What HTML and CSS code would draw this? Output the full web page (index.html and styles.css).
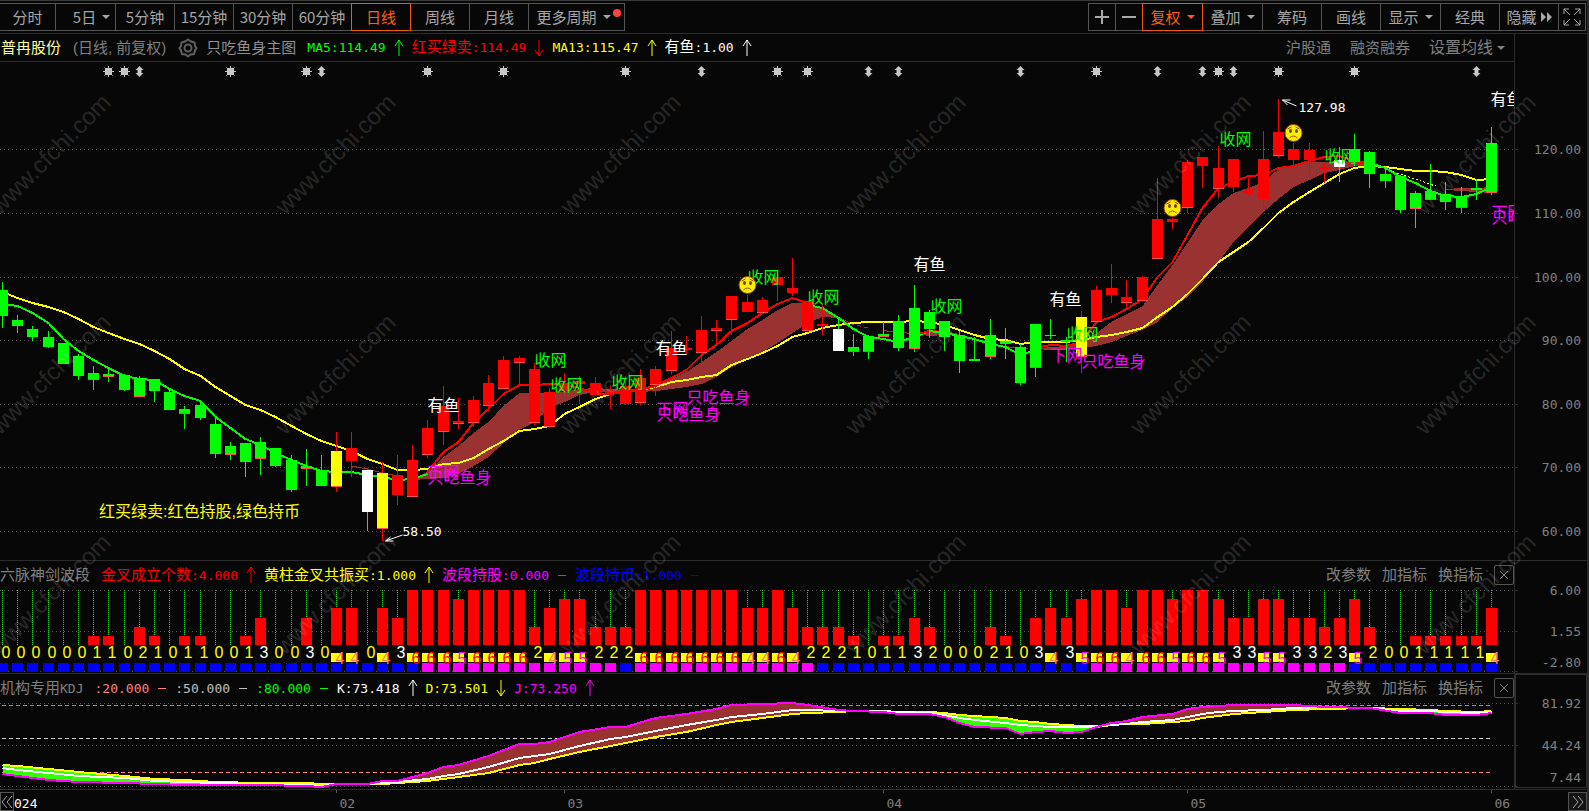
FILE: index.html
```html
<!DOCTYPE html>
<html lang="zh-CN">
<head>
    <meta charset="UTF-8">
    <meta name="viewport" content="width=device-width, initial-scale=1.0">
    <title>普冉股份 日线</title>
    <link rel="stylesheet" href="styles.css">
</head>
<body>
    <div class="toolbar">
        <div class="btn-group">
            <button class="first">分时</button>
            <button class="has-caret wide">5日<i class="caret"></i></button>
            <button>5分钟</button>
            <button>15分钟</button>
            <button>30分钟</button>
            <button>60分钟</button>
            <button class="active">日线</button>
            <button>周线</button>
            <button>月线</button>
            <button class="more">更多周期<i class="caret"></i><i class="dot"></i></button>
        </div>
        <div class="btn-group">
            <button class="icon-btn" aria-label="放大"><svg width="16" height="16"><path d="M8 1V15M1 8H15"/></svg></button>
            <button class="icon-btn" aria-label="缩小"><svg width="16" height="16"><path d="M1 8H15"/></svg></button>
            <button class="active wide">复权<i class="caret"></i></button>
            <button class="wide">叠加<i class="caret"></i></button>
            <button>筹码</button>
            <button>画线</button>
            <button class="wide">显示<i class="caret"></i></button>
            <button>经典</button>
            <button class="hide-btn">隐藏<svg width="11" height="10"><path class="solid" d="M0 0L5 5L0 10ZM6 0L11 5L6 10Z"/></svg></button>
            <button class="icon-btn" aria-label="全屏"><svg class="thin" width="18" height="18"><path d="M1 6V1H6M1 1L7 7M12 1H17V6M17 1L11 7M1 12V17H6M1 17L7 11M12 17H17V12M17 17L11 11"/></svg></button>
        </div>
    </div>

    <section class="panel main-panel">
        <div class="panel-head">
            <div class="fields">
                <span class="stock">普冉股份</span>
                <span class="period">(日线, 前复权)</span>
                <svg class="gear" width="20" height="20"><path d="M10 1.5L13 3.5L16.500 4.500L17 8L18.500 10L17 12.500L16 16L12.500 16.500L10 18.500L7.500 16.500L4 16L3 12.500L1.500 10L3 8L3.500 4.500L7 3.500Z"/><circle cx="10" cy="10" r="3.500"/></svg>
                <span class="name">只吃鱼身主图</span>
                <span class="green"><b>MA5:114.49</b></span><svg class="arrow green" width="10" height="18"><path d="M5 17V1M1 7L5 1L9 7"/></svg>
                <span class="red">红买绿卖<b>:114.49</b></span><svg class="arrow red" width="10" height="18"><path d="M5 1V17M1 11L5 17L9 11"/></svg>
                <span class="yellow"><b>MA13:115.47</b></span><svg class="arrow yellow" width="10" height="18"><path d="M5 17V1M1 7L5 1L9 7"/></svg>
                <span class="white">有鱼<b>:1.00</b></span><svg class="arrow white" width="10" height="18"><path d="M5 17V1M1 7L5 1L9 7"/></svg>
            </div>
            <div class="links main-links">
                <a href="#">沪股通</a>
                <a href="#">融资融券</a>
                <a href="#" class="ma-set">设置均线<i class="caret"></i></a>
            </div>
        </div>
        <svg id="kline" class="chart" role="img" aria-label="K线图"></svg>
    </section>

    <section class="panel">
        <div class="panel-head">
            <div class="fields">
                <span class="title">六脉神剑波段</span>
                <span class="red">金叉成立个数<b>:4.000</b></span><svg class="arrow red" width="10" height="18"><path d="M5 17V1M1 7L5 1L9 7"/></svg>
                <span class="yellow">黄柱金叉共振买<b>:1.000</b></span><svg class="arrow yellow" width="10" height="18"><path d="M5 17V1M1 7L5 1L9 7"/></svg>
                <span class="magenta">波段持股<b>:0.000</b></span><i class="dash magenta"></i>
                <span class="blue">波段持币<b>:1.000</b></span><i class="dash blue"></i>
            </div>
            <div class="links">
                <a href="#">改参数</a>
                <a href="#">加指标</a>
                <a href="#">换指标</a>
                <button class="close" aria-label="关闭"><svg width="10" height="10"><path d="M1 1L9 9M9 1L1 9"/></svg></button>
            </div>
        </div>
        <svg id="bars" class="chart" role="img" aria-label="六脉神剑波段"></svg>
    </section>

    <section class="panel kdj-panel">
        <div class="panel-head">
            <div class="fields">
                <span class="title">机构专用<b>KDJ</b></span>
                <span class="salmon"><b>:20.000</b></span><i class="dash salmon"></i>
                <span class="silver"><b>:50.000</b></span><i class="dash silver"></i>
                <span class="green"><b>:80.000</b></span><i class="dash green"></i>
                <span class="white"><b>K:73.418</b></span><svg class="arrow white" width="10" height="18"><path d="M5 17V1M1 7L5 1L9 7"/></svg>
                <span class="yellow"><b>D:73.501</b></span><svg class="arrow yellow" width="10" height="18"><path d="M5 1V17M1 11L5 17L9 11"/></svg>
                <span class="magenta"><b>J:73.250</b></span><svg class="arrow magenta" width="10" height="18"><path d="M5 17V1M1 7L5 1L9 7"/></svg>
            </div>
            <div class="links">
                <a href="#">改参数</a>
                <a href="#">加指标</a>
                <a href="#">换指标</a>
                <button class="close" aria-label="关闭"><svg width="10" height="10"><path d="M1 1L9 9M9 1L1 9"/></svg></button>
            </div>
        </div>
        <svg id="kdj" class="chart" role="img" aria-label="KDJ"></svg>
    </section>

    <div class="timeline">
        <button class="page-btn" aria-label="向左"><svg width="12" height="14"><path d="M6 1L1 7L6 13M11 1L6 7L11 13"/></svg></button>
        <svg id="dates" class="dates"></svg>
        <button class="page-btn" aria-label="向右"><svg width="12" height="14"><path d="M1 1L6 7L1 13M6 1L11 7L6 13"/></svg></button>
    </div>

    <svg id="watermark" class="watermark" aria-hidden="true"></svg>

    <script src="chart.js"></script>
</body>
</html>
```

FILE: styles.css
```css
* {
    box-sizing: border-box;
}
body {
    margin: 0;
    height: 100vh;
    display: flex;
    flex-direction: column;
    overflow: hidden;
    position: relative;
    background-color: #070707;
    border-right: 2px solid #2a2a2a;
    color: #808080;
    font-family: "Liberation Sans", "Noto Sans CJK SC", sans-serif;
    font-size: 15px;
}
button {
    font-family: "Noto Sans CJK SC", sans-serif;
    font-size: 15px;
    color: #a8a8a8;
    background: none;
    border: 1px solid #555;
    padding: 0;
    cursor: pointer;
}
b {
    font-family: "DejaVu Sans Mono", monospace;
    font-size: 13px;
    font-weight: normal;
}
svg path {
    fill: none;
    stroke: currentColor;
}

/* toolbar */
.toolbar {
    height: 34px;
    flex: none;
    display: flex;
    justify-content: space-between;
    padding-top: 2px;
    padding-right: 1px;
    border-top: 1px solid #3a3a3a;
    border-bottom: 1px solid #2c2c2c;
}
.btn-group {
    display: flex;
    height: 28px;
}
.btn-group button {
    width: 60px;
    margin-left: -1px;
    display: flex;
    align-items: center;
    justify-content: center;
    gap: 6px;
    line-height: 20px;
    white-space: nowrap;
}
.btn-group .first {
    width: 57px;
}
.btn-group .wide {
    width: 61px;
}
.btn-group .has-caret {
    padding-left: 12px;
}
.btn-group .more {
    width: 97px;
    position: relative;
    padding-right: 6px;
}
.btn-group .icon-btn {
    width: 28px;
}
.btn-group .hide-btn {
    gap: 4px;
}
.btn-group .active {
    color: #ff6010;
    border-color: #f05a10;
    position: relative;
    z-index: 1;
}
.icon-btn path {
    stroke-width: 2;
}
.icon-btn .thin path {
    stroke-width: 1;
}
.toolbar path.solid {
    fill: currentColor;
    stroke: none;
}
.caret {
    border: 4px solid transparent;
    border-top-color: currentColor;
    border-bottom: none;
}
.dot {
    position: absolute;
    top: 5px;
    right: 3px;
    width: 8px;
    height: 8px;
    border-radius: 50%;
    background-color: #ff4040;
}

/* chart panels */
.panel {
    flex: none;
    border-top: 1px solid #2c2c2c;
}
.main-panel {
    flex: 1;
    min-height: 0;
    border-top: none;
}
.panel-head {
    height: 28px;
    margin-right: 72px;
    display: flex;
    align-items: center;
    justify-content: space-between;
    line-height: 20px;
    white-space: nowrap;
    border-right: 1px solid #2c2c2c;
}
.main-panel .panel-head {
    border-bottom: 1px solid #2c2c2c;
}
.fields, .links {
    display: flex;
    align-items: center;
}
.fields {
    gap: 8px;
}
.fields .stock {
    color: #ffffa0;
    padding-left: 1px;
}
.fields .period {
    margin: 0 4px;
}
.fields .name {
    margin-right: 3px;
    color: #909090;
}
.fields .title {
    margin-right: 3px;
}
.links {
    gap: 11px;
}
.links a {
    color: #808080;
    text-decoration: none;
}
.main-links {
    gap: 19px;
    padding-right: 9px;
}
.ma-set {
    display: flex;
    align-items: center;
    gap: 4px;
    font-size: 16px;
}
.close {
    width: 20px;
    height: 20px;
    border-radius: 2px;
    display: flex;
    align-items: center;
    justify-content: center;
    color: #808080;
}
.gear {
    color: #606060;
}
.gear path, .gear circle {
    fill: none;
    stroke: currentColor;
    stroke-width: 2;
}
.dash {
    width: 8px;
    height: 1px;
    margin: 0 1px;
    background-color: currentColor;
}
.chart {
    display: block;
    width: 100%;
    overflow: visible;
}
#kline {
    height: 498px;
}
#bars {
    height: 84px;
}
#kdj {
    height: 87px;
}

/* colours */
.red { color: #f00; }
.green { color: #0f0; }
.yellow { color: #ff0; }
.white { color: #fff; }
.magenta { color: #f0f; }
.blue { color: #00f; }
.salmon { color: #ff8080; }
.silver { color: #c0c0c0; }

/* chart text */
.chart text, .dates text {
    font-family: "Liberation Sans", "Noto Sans CJK SC", sans-serif;
    font-size: 16px;
    fill: currentColor;
}
.chart text.num, .dates text.num {
    font-family: "DejaVu Sans Mono", monospace;
    font-size: 13px;
}
.grid {
    stroke: #505050;
    stroke-dasharray: 1 3;
}
.frame {
    stroke: #2c2c2c;
}

/* time axis */
.timeline {
    flex: none;
    height: 22px;
    display: flex;
    align-items: flex-end;
    border-top: 1px solid #2c2c2c;
}
.dates {
    flex: 1;
    height: 21px;
}
.page-btn {
    width: 14px;
    height: 19px;
    display: flex;
    align-items: center;
    justify-content: center;
}
.page-btn:last-child {
    width: 19px;
    background-color: #151515;
}

.watermark {
    position: absolute;
    top: 0;
    left: 0;
    width: 100%;
    height: 100%;
    pointer-events: none;
}
.watermark text {
    font-family: "Liberation Sans", sans-serif;
    font-size: 24px;
    fill: #fff;
    fill-opacity: 0.15;
}
```

FILE: chart.js
```js
const RED = '#ff0000', GREEN = '#00ff00', YELLOW = '#ffff00', WHITE = '#ffffff';
const MAGENTA = '#ff00ff', BLUE = '#0000ff', BAND = '#9a3232';

const AXIS = 72;
const width = document.getElementById('kline').clientWidth || document.body.clientWidth;
const plot = width - AXIS - 1;

// candle: colour, high, body top, body bottom, low, marked close
const candles = [
    ['g',282,290,316,328],['g',315,320,326,333],['g',326,329,337,341],['g',331,337,347,348],['g',343,343,364,364],
    ['g',354,356,376,380],['g',366,373,380,390,1],['g',367,374,377,382,1],['g',374,375,390,391],['g',376,379,397,397,1],
    ['g',379,379,391,402],['g',390,392,410,410],['g',406,409,414,429,1],['g',402,405,418,420],['g',417,424,454,458],
    ['g',442,446,455,460,1],['g',443,443,462,477],['g',437,442,459,475,1],['g',448,448,466,467],['g',455,460,490,492],
    ['g',449,466,469,486,1],['g',455,470,486,486],['y',432,451,487,492,1],['r',432,448,461,477],['w',470,470,512,531],
    ['y',462,473,529,541,1],['r',455,475,495,505],['r',445,460,497,497,1],['r',420,428,455,458,1],['r',386,406,432,445,1],
    ['r',398,421,424,429,1],['r',396,400,423,427,1],['r',375,383,406,411,1],['r',356,360,389,389,1],['r',356,358,363,385,1],
    ['r',363,369,423,425,1],['r',388,392,427,427,1],['r',373,383,391,391],['r',376,381,384,404],['r',377,383,395,396],
    ['r',385,391,394,409],['r',376,386,404,405],['r',369,378,403,405,1],['r',366,369,385,396,1],['r',331,348,371,374,1],
    ['r',336,348,350,354],['r',316,330,353,363,1],['r',320,328,331,346,1],['r',296,296,320,335,1],['r',295,302,312,312],
    ['r',297,300,313,313,1],['r',273,277,285,301],['r',258,288,293,296],['r',301,301,331,331,1],['r',304,324,326,335],
    ['w',317,329,351,351],['g',334,347,352,356,1],['g',335,336,352,359,1],['g',322,334,337,337,1],['g',315,321,348,351],
    ['g',285,308,349,352,1],['g',310,312,329,338],['g',321,321,337,351],['g',331,335,361,373],['g',337,359,361,361],
    ['g',319,335,357,359,1],['g',328,341,344,359],['g',344,347,383,385],['g',324,324,368,377,1],['g',319,335,336,339],
    ['g',337,340,342,362],['y',311,317,357,373,1],['r',286,290,322,322,1],['r',264,288,295,303],['r',280,297,303,307,1],
    ['r',276,277,301,302,1],['r',178,219,259,259,1],['r',218,219,222,229],['r',160,162,208,213,1],['r',157,157,166,188],
    ['r',146,168,189,198,1],['r',159,159,187,192],['r',178,189,194,196],['r',131,159,199,208],['r',99,132,156,158,1],
    ['r',143,149,160,166],['r',143,150,160,178],['r',163,167,169,183],['w',147,160,167,182],['g',134,149,162,166],
    ['g',151,152,174,188],['g',169,174,181,188],['g',175,176,210,213],['g',191,193,209,228,1],['g',164,191,200,200,1],
    ['g',182,194,202,210],['g',187,196,208,213,1],['g',179,188,190,200],['g',127,143,193,195,1]
];
const last = candles.length - 1;

const ma13 = [292,298,303,307,312,319,327,333,339,344,351,359,369,376,387,396,405,410,417,426,434,441,446,451,459,464,470,
    470,469,464,463,458,449,441,431,429,426,414,407,399,394,392,390,387,382,380,377,375,365,359,353,346,337,333,328,325,323,
    322,322,322,321,322,325,330,335,339,340,344,342,342,342,340,337,335,332,328,317,307,294,279,262,252,242,228,213,202,192,
    183,174,168,166,167,169,171,171,172,175,180,179];

// start bar, colour, values
const ma5 = [
    [0, GREEN, [304,306,313,323,339,351,360,368,376,379,380,389,396,401,417,428,439,445,453,460,466,471,472,472,475,477,480,479,474]],
    [28, RED, [472,452,442,423,409,394,385,385,384,384,388,394,394,392,390,386,378,370,355,345,331,323,313,304,298,303]],
    [53, GREEN, [305,308,318,329,337,339,342,337,331]],
    [60, RED, [335,331,332]],
    [61, GREEN, [331,333,336,339,344,347,355,350]],
    [68, RED, [348,345,346,342,322,317,309,299,277,262,235,208,188,182,176,175,168,166,161,157,156,161,163]],
    [90, GREEN, [163,168,177,183,191,196,197,194,187]]
];

// start bar, upper edge, lower edge
const bands = [
    [27, [479,472,457,446,433,422,406,393,393,393,392,389,388,389,390,388,385,379,372,362,352,341,329,320,310,303,303,309,317,324],
         [480,479,478,474,466,457,443,430,422,408,402,395,392,392,392,392,391,389,387,384,377,367,359,352,343,333,323,317,318,325]],
    [58, [330,332,333,332,331,334], [331,333,334,336,335,336]],
    [66, [346,348,349,347,347,343,333,322,314,306,285,265,243,220,204,193,188,182,169,167,162,162,161,162,162],
         [347,349,349,350,349,348,346,342,336,330,322,308,297,282,262,242,227,212,199,187,180,173,170,166,166]],
    [95, [189,188,188,187], [190,191,192,193]]
];

const counts = '000000110210110013003044043' +
    '666566662455222666666644642' +
    '22101132000210343566466566' +
    '5335533235200111114';

// position of each bar follows the plot width
function barX(i) {
    return 2 + Math.round(i * (plot - 25) / last) + 0.5;
}

function tag(name, attrs, text) {
    const list = Object.keys(attrs).map(k => `${k}="${attrs[k]}"`).join(' ');
    return `<${name} ${list}>${text === undefined ? '' : text}</${name}>`;
}
function rect(x, y, w, h, fill) {
    return tag('rect', { x, y, width: w, height: h, fill });
}
function line(x1, y1, x2, y2, attrs) {
    return tag('line', Object.assign({ x1, y1, x2, y2 }, attrs));
}
function vline(x, y1, y2, stroke) {
    return line(x, y1, x, y2, { stroke });
}
function polyline(points, color, w) {
    return tag('polyline', { points: points.map(p => p.join()).join(' '), fill: 'none', stroke: color, 'stroke-width': w });
}
function polygon(points, fill) {
    return tag('polygon', { points: points.map(p => p.join()).join(' '), fill });
}
function text(x, y, str, color, cls) {
    return tag('text', { x, y: y + (cls ? 5 : 6), color, class: cls || '' }, str);
}
function setSvg(id, top, height, html) {
    const svg = document.getElementById(id);
    svg.setAttribute('viewBox', `0 ${top} ${svg.clientWidth || width} ${height}`);
    svg.innerHTML = html;
}
function axis(rows, top, bottom) {
    let out = line(plot + 0.5, top, plot + 0.5, bottom, { class: 'frame' });
    rows.forEach(([y, label, labelY]) => {
        out += line(0, y + 0.5, plot, y + 0.5, { class: 'grid' });
        out += line(plot, y + 0.5, plot + 4, y + 0.5, { class: 'frame' });
        out += tag('text', { x: width - 6, y: (labelY || y) + 5, class: 'num', 'text-anchor': 'end' }, label);
    });
    return out;
}

function face(x, y) {
    return `<g transform="translate(${x},${y})">
        <circle r="8.500" fill="#ffee00" stroke="#a04800"/>
        <ellipse cx="-3" cy="-2" rx="1.500" ry="2" fill="#804000"/><ellipse cx="3" cy="-2" rx="1.500" ry="2" fill="#804000"/>
        <path d="M-6 -4L-2 -6M6 -4L2 -6M-4 5Q0 1 4 5" color="#a05000"/></g>`;
}

function drawKline() {
    let s = axis([[149, '120.00'], [213, '110.00'], [277, '100.00'], [340, '90.00'], [404, '80.00'], [467, '70.00'], [531, '60.00']], 62, 560);
    s += `<clipPath id="plotArea">${rect(0, 62, plot, 498, WHITE)}</clipPath><g clip-path="url(#plotArea)">`;

    // event marks above the candles
    [7, 8, 15, 20, 28, 33, 41, 51, 53, 72, 80, 84, 89].forEach(i => {
        const x = barX(i);
        s += rect(x - 3.5, 68, 7, 7, '#c8c8c8');
        s += tag('path', { d: `M${x} 66V77M${x - 5.5} 71.5H${x + 5.5}M${x - 4} 67.500L${x + 4} 75.500M${x + 4} 67.500L${x - 4} 75.500`, color: '#c8c8c8' });
    });
    [9, 21, 46, 57, 59, 67, 76, 79, 81, 97].forEach(i => {
        const x = barX(i);
        s += polygon([[x, 66], [x + 4, 70], [x + 2, 70], [x + 2, 73], [x + 4, 73], [x, 77], [x - 4, 73], [x - 2, 73], [x - 2, 70], [x - 4, 70]], '#c8c8c8');
    });

    s += '<g shape-rendering="crispEdges">';
    bands.forEach(([start, up, low]) => {
        const a = up.map((y, k) => [barX(start + k), y]);
        const b = low.map((y, k) => [barX(start + k), y]).reverse();
        s += polygon(a.concat(b), BAND);
    });
    s += polyline([[barX(23), 466], [barX(24), 469], [barX(25), 473], [barX(26), 476]], BAND, 1);
    s += line(barX(56) - 10, 322, barX(57), 328, { stroke: BAND, 'stroke-dasharray': '4 3' });
    s += line(barX(91), 169, barX(94) + 5, 186, { stroke: YELLOW, 'stroke-dasharray': '2 2' });
    s += polyline(ma13.map((y, i) => [barX(i), y]), YELLOW, 2);
    ma5.forEach(([start, color, ys]) => {
        s += polyline(ys.map((y, k) => [barX(start + k), y]), color, 2);
    });
    const fills = { g: GREEN, r: RED, y: YELLOW, w: WHITE };
    const wicks = { g: GREEN, r: RED, y: RED, w: GREEN };
    candles.forEach(([c, high, top, bottom, low, mark], i) => {
        const x = barX(i);
        s += vline(x, high, low, wicks[c]);
        s += rect(x - 5.5, top, 11, Math.max(1, bottom - top), fills[c]);
        if (mark) s += rect(x - 5.5, bottom - 1, 11, 1, '#ff5050');
    });
    s += '</g>';

    // labels: bar, x offset, y
    [[28, 0, 405], [43, 0, 348], [60, -1, 264], [69, -1, 299], [98, -1, 99]].forEach(([i, dx, y]) => {
        s += text(barX(i) + dx, y, '有鱼', WHITE);
    });
    [[35, 0, 360], [36, 1, 385], [40, 1, 382], [49, 0, 277], [53, 0, 297], [61, 1, 306], [70, 0, 334], [80, 1, 139], [87, 0, 156]].forEach(([i, dx, y]) => {
        s += text(barX(i) + dx, y, '收网', GREEN);
    });
    [[28, 0, 472, 477], [43, 1, 409, 414], [69, 0, 355, 0], [98, 0, 212, 217]].forEach(([i, dx, y, y2]) => {
        s += text(barX(i) + dx, y, '下网', MAGENTA);
        if (y2) s += text(barX(i) + dx, y2, '只吃鱼身', MAGENTA);
    });
    s += text(barX(45), 397, '只吃鱼身', MAGENTA);
    s += text(barX(71), 361, '只吃鱼身', MAGENTA);
    s += face(barX(49), 285) + face(barX(77), 208) + face(barX(85), 133);

    s += text(barX(84) + 20, 107, '127.98', WHITE, 'num');
    s += tag('path', { d: `M${barX(84) + 18} 106L${barX(84) + 4} 100L${barX(84) + 12} 100M${barX(84) + 4} 100L${barX(84) + 9} 105`, color: WHITE });
    s += text(barX(25) + 20, 531, '58.50', WHITE, 'num');
    s += tag('path', { d: `M${barX(25) + 20} 535L${barX(25) + 3} 541H${barX(25) + 11}M${barX(25) + 3} 541L${barX(25) + 8} 537`, color: WHITE });
    s += text(99, 511, '红买绿卖:红色持股,绿色持币', YELLOW);
    s += '</g>';
    setSvg('kline', 62, 498, s);
}

function drawBars() {
    let s = axis([[590, '6.00'], [631, '1.55'], [671, '-2.80', 662]], 589, 673);
    let labels = '';
    s += '<g shape-rendering="crispEdges">';
    for (let i = 0; i <= last; i++) {
        const n = Number(counts[i]);
        const x = barX(i);
        const h = Math.round(n * 9.15);
        s += line(x, 590, x, 645 - h, { stroke: '#20e020', 'stroke-dasharray': '1 1' });
        if (n) s += rect(x - 5.5, 645 - h, 11, h, RED);
        const hold = (i > 27 && i < 54 && i !== 41) || (i > 71 && i < 89);
        s += rect(x - 5.5, 663, 11, 9, hold ? MAGENTA : BLUE);
        if (n > 3) {
            s += rect(x - 5.5, 653, 11, 9, YELLOW);
            labels += text(x - 1, 658, n, { 4: '#ff8060', 5: MAGENTA, 6: RED }[n]);
        } else {
            labels += text(x - 1, 652, n, n === 3 ? WHITE : YELLOW);
        }
    }
    s += '</g>' + labels;
    setSvg('bars', 589, 84, s);
}

function drawKdj() {
    // bar, J, K, D
    const keys = [
        [0,774,768,765],[1,776,770,766],[3,780,773,769],[5,782,776,772],[8,783,778,776],[10,784,781,779],[12,785,782,780],
        [14,785,783,782],[17,785,784,783],[20,786,785,783],[21,787,786,784],[22,784,784,784],[24,784,784,784],[25,781,783,784],
        [26,781,782,783],[28,773,779,781],[29,767,776,779],[30,765,774,777],[32,756,767,773],[34,744,758,765],[35,744,756,763],
        [36,742,754,759],[38,732,746,752],[40,727,739,746],[41,727,737,743],[43,718,731,737],[45,714,725,732],[47,709,720,725],
        [48,705,717,722],[50,704,714,718],[52,703,710,714],[53,705,710,713],[55,710,711,712],[56,711,711,711],[58,712,711,711],
        [59,714,712,712],[61,714,713,712],[62,717,715,713],[63,723,718,715],[64,727,720,716],[66,728,723,718],[67,734,725,721],
        [68,732,726,722],[69,731,727,724],[70,733,727,725],[71,732,727,726],[72,727,726,727],[73,723,725,725],[74,721,724,724],
        [75,717,722,724],[77,714,720,722],[78,709,717,721],[79,707,714,718],[80,706,712,716],[81,705,711,714],[83,705,710,712],
        [85,705,708,710],[87,707,707,709],[90,708,708,708],[92,713,711,709],[94,713,711,710],[95,715,712,711],[97,715,713,712],[98,713,712,711]
    ];
    let s = axis([[703, '81.92'], [745, '44.24'], [786, '7.44', 777]], 702, 789);
    s += '<g shape-rendering="crispEdges">';
    [[705, GREEN], [738, '#d0d0d0'], [772, '#ff8080']].forEach(([y, stroke]) => {
        s += line(2, y + 0.5, barX(last), y + 0.5, { stroke, 'stroke-dasharray': '4 3' });
    });
    for (let k = 1; k < keys.length; k++) {
        const a = keys[k - 1], b = keys[k];
        const x1 = barX(a[0]), x2 = barX(b[0]);
        const below = a[1] + b[1] > a[3] + b[3];
        s += polygon([[x1, a[1]], [x2, b[1]], [x2, b[3]], [x1, a[3]]], below ? '#32ff00' : BAND);
    }
    s += polyline(keys.map(k => [barX(k[0]), k[3]]), YELLOW, 2);
    s += polyline(keys.map(k => [barX(k[0]), k[2]]), WHITE, 2);
    s += polyline(keys.map(k => [barX(k[0]), k[1]]), MAGENTA, 2);
    // outline round the axis of the selected panel
    s += tag('path', { d: `M${plot + 1} 674V787H${width - 1}V674Z`, color: '#303030' });
    s += '</g>';
    setSvg('kdj', 702, 87, s);
}

function drawDates() {
    let s = '';
    const left = 14;
    [[22, '02'], [37, '03'], [58, '04'], [78, '05'], [98, '06']].forEach(([i, label]) => {
        s += line(barX(i) - left, 790, barX(i) - left, 793, { stroke: '#505050' });
        s += tag('text', { x: barX(i) - left + 3, y: 808, class: 'num' }, label);
    });
    s += tag('text', { x: 0, y: 808, class: 'num', color: '#ffffff' }, '024');
    const svg = document.getElementById('dates');
    svg.setAttribute('viewBox', `0 790 ${width - 33} 21`);
    svg.innerHTML = s;
}

function drawWatermark() {
    let s = '';
    for (let y = 216; y < window.innerHeight; y += 220) {
        for (let x = 0; x < window.innerWidth; x += 285) {
            s += tag('text', { transform: `translate(${x},${y}) rotate(-45)` }, 'www.cfchi.com');
        }
    }
    document.getElementById('watermark').innerHTML = s;
}

drawKline();
drawBars();
drawKdj();
drawDates();
drawWatermark();
```
